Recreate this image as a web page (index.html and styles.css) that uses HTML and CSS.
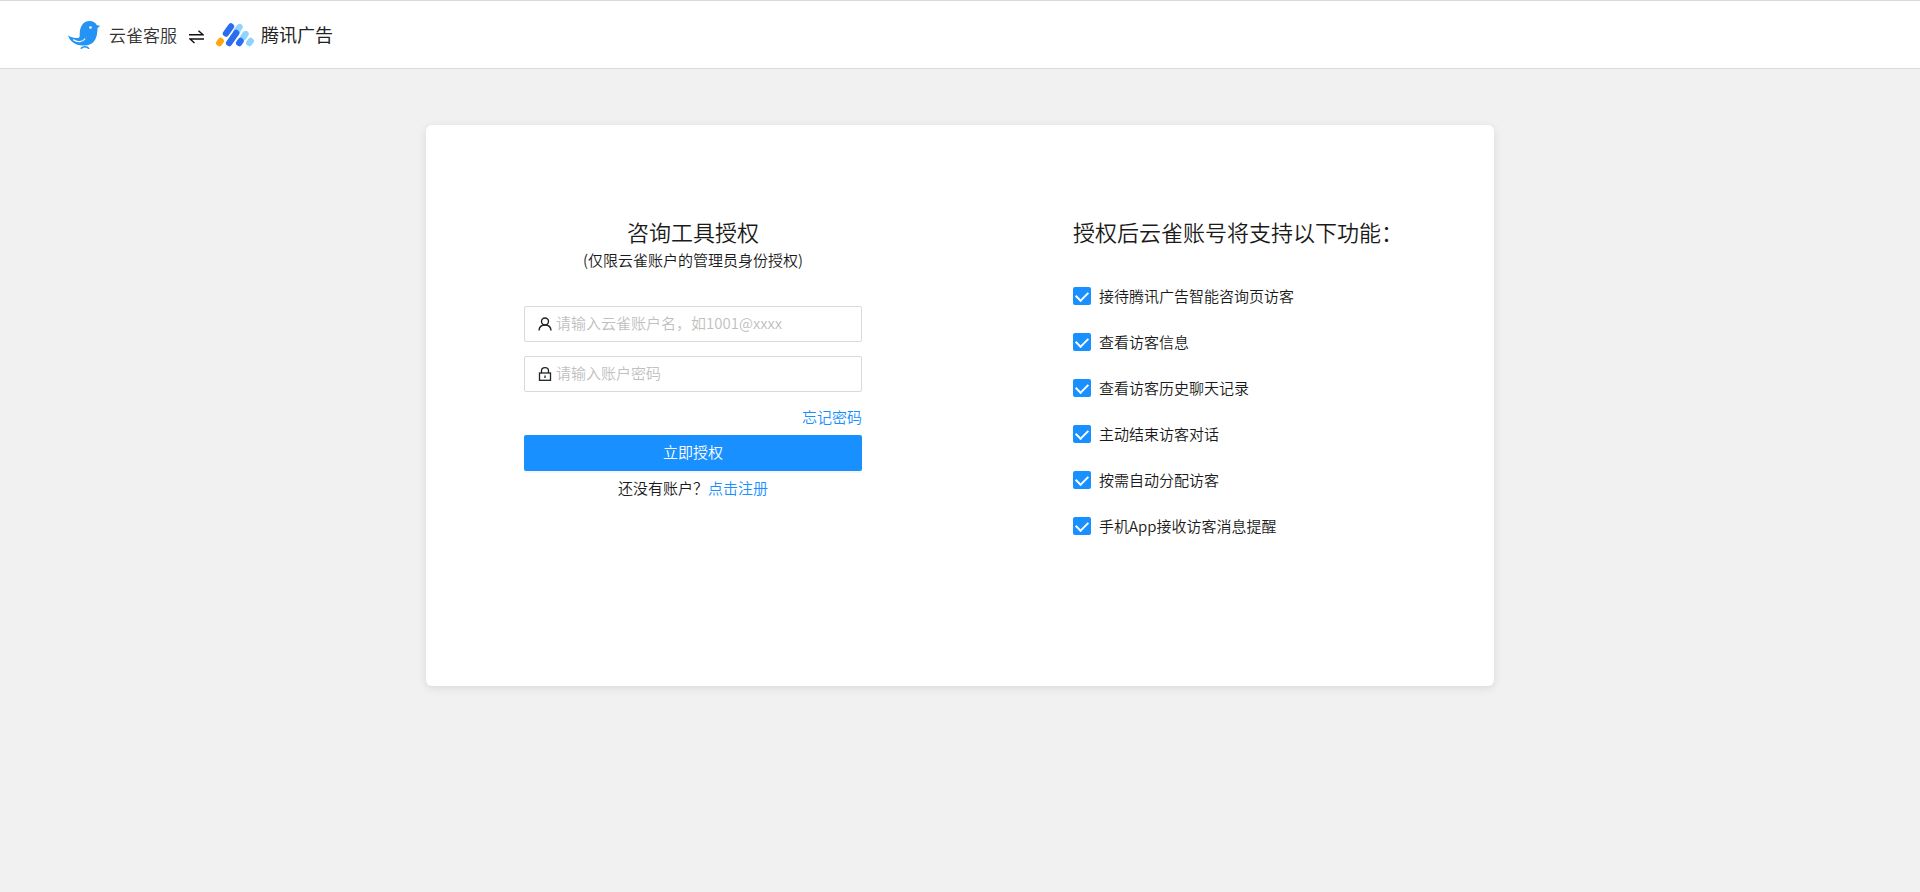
FILE: index.html
```html
<!DOCTYPE html>
<html lang="zh-CN">
<head>
    <meta charset="UTF-8">
    <meta name="viewport" content="width=device-width, initial-scale=1.0">
    <title>咨询工具授权</title>
    <link rel="stylesheet" href="styles.css">
</head>
<body>
    <header class="header">
        <svg class="logo-bird" width="32" height="28" viewBox="0 0 32 28" aria-hidden="true">
            <path fill="#2593f3" d="M0 14.3c3 2.2 6.500 3.200 10.200 2.600 1.600-.3 1.500-1.500 1.500-3.600C11.500 6 15 0 21.500 0c3.600 0 6.200 1.800 7.400 4.200L32 4.800c-.5 1-1.600 1.500-2.500 2.200C29.400 15 28 24.600 15 24.600 7 24.600 1.500 20 0 14.300z"/>
            <path fill="none" stroke="#fff" stroke-width="1.2" stroke-linecap="round" d="M5.500 18.800c4 3 9 2.300 11.300-.8"/>
            <path fill="none" stroke="#2593f3" stroke-width="1.5" d="M13 27.800c1-2.800 6.500-2.800 8 0"/>
            <circle cx="22.500" cy="6.500" r="1.3" fill="#fff"/>
        </svg>
        <span class="brand">云雀客服</span>
        <svg class="swap" width="15" height="14" viewBox="0 0 15 14" fill="none" stroke="#111" stroke-width="1.5" aria-hidden="true">
            <path d="M0 4.800h14L9.500.8M15 9H1l4.500 4"/>
        </svg>
        <svg class="logo-ad" width="38" height="24" viewBox="0 0 38 24" fill="none" stroke-width="6.4" stroke-linecap="round" aria-hidden="true">
            <path stroke="#8fd3ff" d="M20.500 8.500l3-4.500M27.500 14l2-3M33.300 20l1.400-2"/>
            <path stroke="#2b6cf0" d="M10 10.500l5-7M13.200 20l7-10M23.200 20l1.400-2"/>
            <path stroke="#ffa60a" d="M3.300 20l1.400-2"/>
        </svg>
        <span class="brand brand-ad">腾讯广告</span>
    </header>

    <main class="card">
        <section class="auth">
            <h1>咨询工具授权</h1>
            <p class="tip">(仅限云雀账户的管理员身份授权)</p>
            <form>
                <label class="field">
                    <svg width="14" height="14" viewBox="0 0 14 14" fill="none" stroke="#222" stroke-width="1.4" aria-hidden="true">
                        <circle cx="7" cy="4.500" r="3.500"/>
                        <path d="M1 13.500c.2-3.500 2.700-5.500 6-5.500s5.800 2 6 5.500"/>
                    </svg>
                    <input type="text" name="account" aria-label="账户名" placeholder="请输入云雀账户名，如1001@xxxx">
                </label>
                <label class="field">
                    <svg width="14" height="14" viewBox="0 0 14 14" fill="none" stroke="#222" stroke-width="1.3" aria-hidden="true">
                        <rect x="1.500" y="6" width="11" height="7.300"/>
                        <path d="M3.500 6V3.800C3.500 2 4.800.7 7 .7s3.500 1.300 3.500 3.100V6M7 8.500v2.500"/>
                    </svg>
                    <input type="password" name="password" aria-label="账户密码" placeholder="请输入账户密码">
                </label>
                <a class="forgot" href="#">忘记密码</a>
                <button type="submit">立即授权</button>
            </form>
            <p class="register">还没有账户？<a href="#">点击注册</a></p>
        </section>

        <section class="features">
            <h2>授权后云雀账号将支持以下功能：</h2>
            <ul>
                <li><label><input type="checkbox" checked>接待腾讯广告智能咨询页访客</label></li>
                <li><label><input type="checkbox" checked>查看访客信息</label></li>
                <li><label><input type="checkbox" checked>查看访客历史聊天记录</label></li>
                <li><label><input type="checkbox" checked>主动结束访客对话</label></li>
                <li><label><input type="checkbox" checked>按需自动分配访客</label></li>
                <li><label><input type="checkbox" checked>手机App接收访客消息提醒</label></li>
            </ul>
        </section>
    </main>
</body>
</html>
```
FILE: styles.css
```css
* {
    box-sizing: border-box;
}

body {
    margin: 0;
    background-color: #f1f1f1;
    color: #1a1a1a;
    font-family: "Noto Sans CJK SC", sans-serif;
    font-size: 15px;
    font-weight: 350;
    line-height: 22px;
}

h1, h2, p, ul {
    margin: 0;
    padding: 0;
}

h1, h2 {
    font-size: 22px;
    font-weight: 350;
    line-height: 30px;
}

a {
    color: #1890ff;
    text-decoration: none;
}

.header {
    display: flex;
    align-items: center;
    height: 69px;
    padding-left: 68px;
    background-color: #fff;
    border-top: 1px solid #d9d9d9;
    border-bottom: 1px solid #d9d9d9;
}

.brand {
    margin-left: 9px;
    font-size: 17px;
    color: #333;
}

.brand-ad {
    margin-left: 7px;
    padding-bottom: 2px;
    font-size: 18px;
    font-weight: 400;
    line-height: 24px;
    color: #222;
}

.swap {
    margin: 4px 12px 0;
}

.card {
    display: flex;
    width: 1068px;
    max-width: 100%;
    margin: 56px auto;
    padding: 91px 0 149px;
    background-color: #fff;
    border-radius: 6px;
    box-shadow: 0 2px 10px rgba(0, 0, 0, 0.1);
}

.auth {
    width: 50%;
    padding: 0 98px;
    text-align: center;
}

.tip {
    margin-top: 3px;
}

form {
    display: flex;
    flex-direction: column;
    margin-top: 35px;
}

.field {
    display: flex;
    align-items: center;
    height: 36px;
    margin-bottom: 14px;
    padding: 0 13px;
    border: 1px solid #d9d9d9;
    border-radius: 2px;
}

.field input {
    flex: 1;
    min-width: 0;
    height: 22px;
    margin-left: 4px;
    padding: 0 0 2px;
    border: none;
    outline: none;
    font: inherit;
}

.field input::placeholder {
    color: #bfbfbf;
}

.forgot {
    align-self: flex-end;
    margin-bottom: 7px;
}

button {
    height: 36px;
    padding-bottom: 3px;
    border: none;
    border-radius: 2px;
    background-color: #1890ff;
    box-shadow: 0 2px 0 rgba(0, 0, 0, 0.04);
    color: #fff;
    font: inherit;
    cursor: pointer;
}

.register {
    margin-top: 6px;
}

.features {
    width: 50%;
    padding-left: 113px;
}

.features ul {
    display: flex;
    flex-direction: column;
    gap: 24px;
    margin-top: 39px;
    list-style: none;
}

.features label {
    display: flex;
    align-items: center;
}

.features input {
    appearance: none;
    display: grid;
    place-items: center;
    width: 18px;
    height: 18px;
    margin: 0 8px 0 0;
    border-radius: 2px;
    background-color: #1890ff;
}

/* white tick */
.features input::after {
    content: "";
    width: 6px;
    height: 10px;
    border: solid #fff;
    border-width: 0 2px 2px 0;
    transform: translateY(-1px) rotate(45deg);
}
```
